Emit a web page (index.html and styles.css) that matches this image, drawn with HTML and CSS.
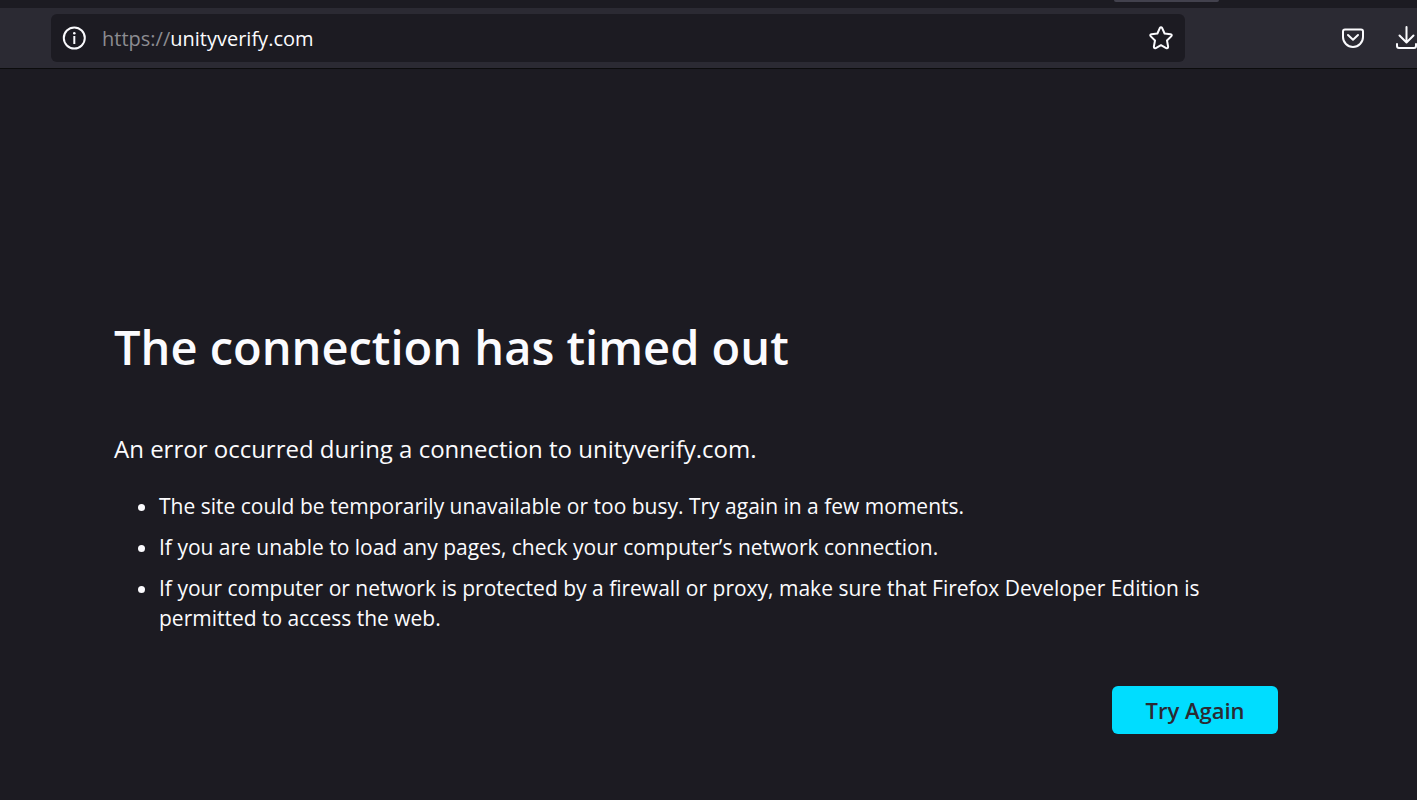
FILE: index.html
```html
<!DOCTYPE html>
<html lang="en">
<head>
<meta charset="utf-8">
<meta name="viewport" content="width=device-width, initial-scale=1">
<title>Problem loading page</title>
<link rel="stylesheet" href="styles.css">
</head>
<body>
<header class="browser">
  <div class="tabstrip"><div class="tab-edge"></div></div>
  <nav class="toolbar" aria-label="Navigation">
    <div class="urlbar">
      <button class="icon-button" type="button" aria-label="Site information">
        <svg width="24" height="24" viewBox="0 0 24 24" fill="none" stroke="currentColor" stroke-width="2"><circle cx="12.3" cy="12" r="10.5"/><path d="M12.3 10V18"/><circle cx="12.3" cy="7.2" r="1.3" fill="currentColor" stroke="none"/></svg>
      </button>
      <div class="location">
        <label class="scheme" for="address">https://</label>
        <input class="address" id="address" type="text" value="unityverify.com" spellcheck="false">
      </div>
      <button class="icon-button" type="button" aria-label="Bookmark this page">
        <svg width="24" height="24" viewBox="0 0 24 24" fill="none" stroke="currentColor" stroke-width="2" stroke-linejoin="round"><path d="M10.8 2.1Q12 .2 13.2 2.1L15.6 7.5L21.5 8.2Q23.6 8.7 22.2 10.4L18 14.5L19.1 20.5Q19.2 22.9 17.2 22.1L12 19.2L6.8 22.1Q4.8 22.9 4.9 20.5L6 14.5L1.8 10.4Q.4 8.7 2.5 8.2L8.4 7.5Z"/></svg>
      </button>
    </div>
    <div class="actions">
      <button class="icon-button" type="button" aria-label="Save to Pocket">
        <svg width="24" height="24" viewBox="0 0 24 24" fill="none" stroke="currentColor" stroke-width="2" stroke-linecap="round" stroke-linejoin="round"><path d="M4 3.5H20Q22 3.5 22 5.5V11A10 10 0 0 1 2 11V5.5Q2 3.5 4 3.5Z"/><path d="M7 9L12 13.8L17 9"/></svg>
      </button>
      <button class="icon-button" type="button" aria-label="Downloads">
        <svg width="24" height="24" viewBox="0 0 24 24" fill="none" stroke="currentColor" stroke-width="2" stroke-linecap="round" stroke-linejoin="round"><path d="M11.5 1V16M4.5 9.5L11.5 16.5L18.5 9.5M2 18V20Q2 22 4 22H19Q21 22 21 20V18"/></svg>
      </button>
    </div>
  </nav>
</header>
<main class="page">
  <h1 class="title">The connection has timed out</h1>
  <p class="summary">An error occurred during a connection to unityverify.com.</p>
  <ul class="hints">
    <li>The site could be temporarily unavailable or too busy. Try again in a few moments.</li>
    <li>If you are unable to load any pages, check your computer’s network connection.</li>
    <li>If your computer or network is protected by a firewall or proxy, make sure that Firefox Developer Edition is permitted to access the web.</li>
  </ul>
  <div class="buttons"><button class="primary" type="button">Try Again</button></div>
</main>
</body>
</html>
```
FILE: styles.css
```css
* {
  box-sizing: border-box;
}

body {
  margin: 0;
  min-height: 100vh;
  background: #1c1b22;
  color: #fbfbfe;
  font-family: "Segoe UI", "Open Sans", "Noto Sans", sans-serif;
  font-size: 21px;
}

.tabstrip {
  display: flex;
  justify-content: flex-end;
  height: 8px;
  padding-right: 198px;
}

.tab-edge {
  width: 105px;
  height: 2px;
  border-radius: 0 0 4px 4px;
  background: #42414d;
}

.toolbar {
  display: flex;
  align-items: center;
  height: 61px;
  padding-left: 51px;
  overflow: hidden;
  background: #2b2a33;
  border-bottom: 1px solid #0c0c0d;
}

.urlbar {
  display: flex;
  flex: 1;
  align-items: center;
  min-width: 0;
  height: 48px;
  padding: 0 12px 0 11px;
  border-radius: 6px;
  background: #1c1b22;
}

.icon-button {
  flex: none;
  display: block;
  width: 24px;
  height: 24px;
  padding: 0;
  border: 0;
  background: none;
  color: #fbfbfe;
}

.icon-button svg {
  display: block;
}

.location {
  display: flex;
  flex: 1;
  align-items: baseline;
  min-width: 0;
  padding-top: 2px;
  margin-left: 16px;
  font-size: 20px;
  line-height: 28px;
}

.scheme {
  color: #8c8c91;
}

.address {
  flex: 1;
  min-width: 0;
  padding: 0;
  border: 0;
  outline: 0;
  background: none;
  color: #fbfbfe;
  font: inherit;
}

.actions {
  display: flex;
  flex: none;
  gap: 30px;
  width: 232px;
  padding-left: 156px;
}

.page {
  padding: 243px 139px 64px 114px;
}

.title {
  margin: 0;
  font-size: 47px;
  font-weight: 600;
  line-height: 70px;
}

.summary {
  margin: 48px 0 0;
  font-size: 24px;
  line-height: 38px;
}

.hints {
  display: grid;
  gap: 11px;
  margin: 23px 0 0;
  padding-left: 45px;
  line-height: 30px;
}

.buttons {
  display: flex;
  justify-content: flex-end;
  margin-top: 53px;
}

.primary {
  min-width: 166px;
  height: 48px;
  padding: 0 32px;
  border: 0;
  border-radius: 6px;
  background: #00ddff;
  color: #2b2a33;
  font-family: inherit;
  font-size: 22px;
  font-weight: 600;
}
```
